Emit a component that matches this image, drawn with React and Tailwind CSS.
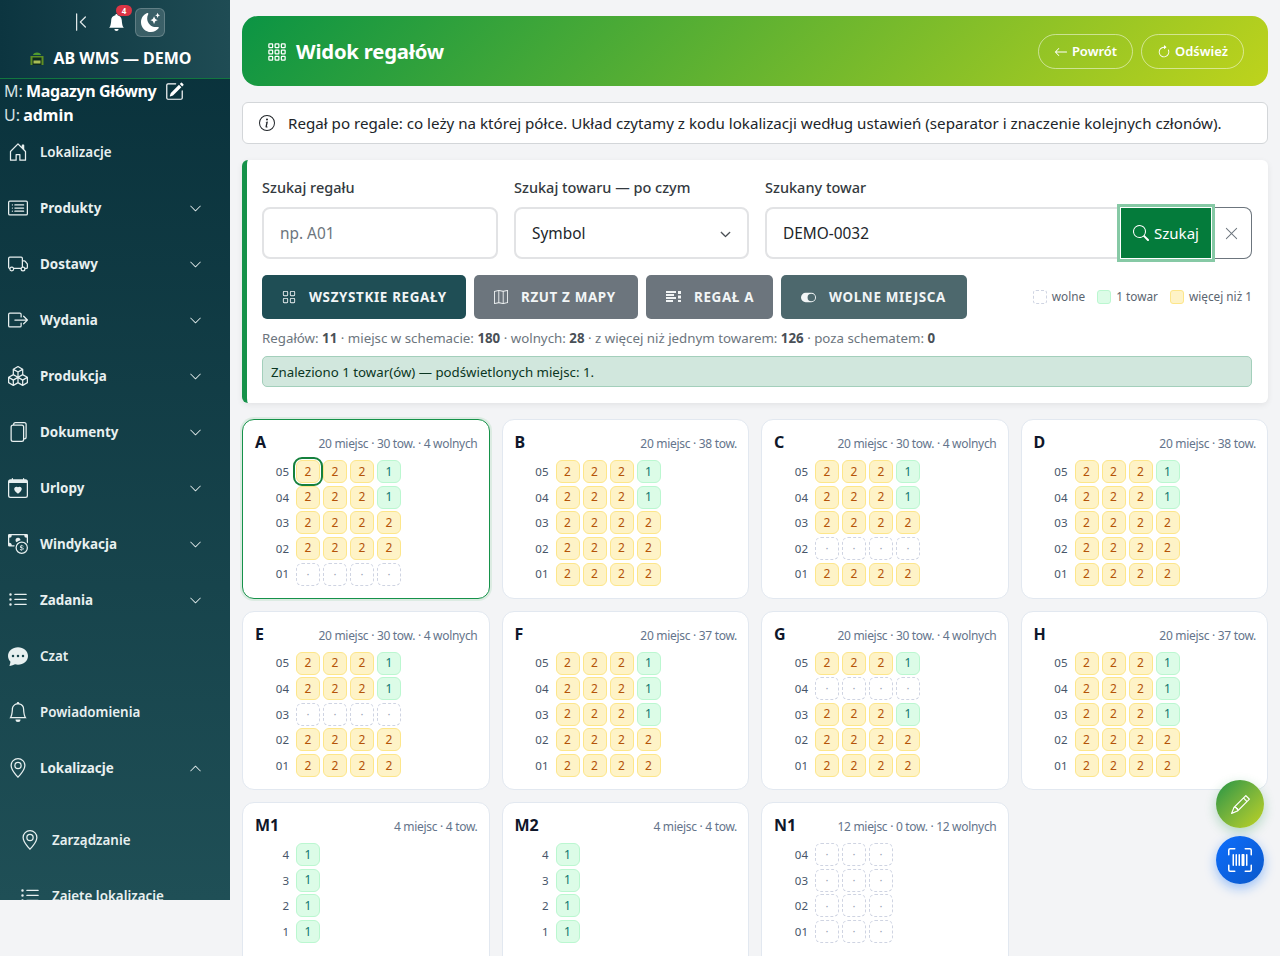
import React from "react";
import {
  BsArrowClockwise,
  BsArrowLeft,
  BsBell,
  BsBellFill,
  BsBoxArrowRight,
  BsBoxes,
  BsCalendarHeart,
  BsCardList,
  BsCashCoin,
  BsChatDotsFill,
  BsChevronBarLeft,
  BsChevronDown,
  BsChevronUp,
  BsFiles,
  BsGeoAlt,
  BsGrid,
  BsGrid3X3Gap,
  BsHouseDoor,
  BsInfoCircle,
  BsListUl,
  BsMap,
  BsMoonStarsFill,
  BsPencil,
  BsPencilSquare,
  BsSearch,
  BsToggleOn,
  BsTruck,
  BsUpcScan,
  BsXLg,
} from "react-icons/bs";

const menu = [
  { label: "Lokalizacje", icon: BsHouseDoor, plain: true },
  { label: "Produkty", icon: BsCardList },
  { label: "Dostawy", icon: BsTruck },
  { label: "Wydania", icon: BsBoxArrowRight },
  { label: "Produkcja", icon: BsBoxes },
  { label: "Dokumenty", icon: BsFiles },
  { label: "Urlopy", icon: BsCalendarHeart },
  { label: "Windykacja", icon: BsCashCoin },
  { label: "Zadania", icon: BsListUl },
  { label: "Czat", icon: BsChatDotsFill, plain: true },
  { label: "Powiadomienia", icon: BsBell, plain: true },
];

const full = "2222";
const racks = [
  { name: "A", info: "20 miejsc · 30 tow. · 4 wolnych", rows: [["05", "2221", true], ["04", "2221"], ["03", full], ["02", full], ["01", "...."]] },
  { name: "B", info: "20 miejsc · 38 tow.", rows: [["05", "2221"], ["04", "2221"], ["03", full], ["02", full], ["01", full]] },
  { name: "C", info: "20 miejsc · 30 tow. · 4 wolnych", rows: [["05", "2221"], ["04", "2221"], ["03", full], ["02", "...."], ["01", full]] },
  { name: "D", info: "20 miejsc · 38 tow.", rows: [["05", "2221"], ["04", "2221"], ["03", full], ["02", full], ["01", full]] },
  { name: "E", info: "20 miejsc · 30 tow. · 4 wolnych", rows: [["05", "2221"], ["04", "2221"], ["03", "...."], ["02", full], ["01", full]] },
  { name: "F", info: "20 miejsc · 37 tow.", rows: [["05", "2221"], ["04", "2221"], ["03", "2221"], ["02", full], ["01", full]] },
  { name: "G", info: "20 miejsc · 30 tow. · 4 wolnych", rows: [["05", "2221"], ["04", "...."], ["03", "2221"], ["02", full], ["01", full]] },
  { name: "H", info: "20 miejsc · 37 tow.", rows: [["05", "2221"], ["04", "2221"], ["03", "2221"], ["02", full], ["01", full]] },
  { name: "M1", info: "4 miejsc · 4 tow.", rows: [["4", "1"], ["3", "1"], ["2", "1"], ["1", "1"]] },
  { name: "M2", info: "4 miejsc · 4 tow.", rows: [["4", "1"], ["3", "1"], ["2", "1"], ["1", "1"]] },
  { name: "N1", info: "12 miejsc · 0 tow. · 12 wolnych", rows: [["04", "..."], ["03", "..."], ["02", "..."], ["01", "..."]] },
];

function Cell({ value, found }) {
  if (value === ".") {
    return (
      <div className="w-6 h-[23px] rounded-md border border-dashed border-[#cfd4e2] flex items-center justify-center text-[11px] text-[#9aa3b5]">
        ·
      </div>
    );
  }
  const tone =
    value === "1"
      ? "bg-[#dcfce7] border-[#bbf7d0] text-[#0f766e]"
      : "bg-[#fef3c7] border-[#fde68a] text-[#b45309]";
  return (
    <div
      className={`w-6 h-[23px] rounded-md border flex items-center justify-center text-xs ${tone} ${
        found ? "outline-2 outline-[#15803d] outline-offset-[1px]" : ""
      }`}
    >
      {value}
    </div>
  );
}

function RackCard({ rack }) {
  const active = rack.name === "A";
  return (
    <div
      className={`bg-white rounded-xl border pl-3 pr-[11px] pt-[12px] pb-3 min-h-[179.5px] ${
        active ? "border-[#16924a] shadow-[0_0_0_2px_#dcebe2]" : "border-[#e2e8f0]"
      }`}
    >
      <div className="flex items-baseline justify-between h-5 mb-[8px]">
        <span className="text-base font-bold text-[#0f172a] leading-5">{rack.name}</span>
        <span className="text-xs tracking-[-0.3px] text-[#64748b]">{rack.info}</span>
      </div>
      <div className="flex flex-col gap-[2.65px]">
        {rack.rows.map(([label, cells, found]) => (
          <div key={label} className="flex items-center gap-[3px]">
            <span className="w-[34px] mr-[4px] text-right text-[11.5px] text-[#475569]">{label}</span>
            {cells.split("").map((v, i) => (
              <Cell key={i} value={v} found={found && i === 0} />
            ))}
          </div>
        ))}
      </div>
    </div>
  );
}

function NavRow({ item }) {
  const Icon = item.icon;
  return (
    <div className="h-14 flex items-center pl-2 pr-[28px] text-[#e8f0f0]">
      <span className="w-[32px] flex justify-start">
        <Icon className="text-[20px]" />
      </span>
      <span className={`flex-1 text-[13.4px] ${item.plain ? "font-semibold" : "font-bold"}`}>{item.label}</span>
      {!item.plain && <BsChevronDown className="text-[13px]" />}
    </div>
  );
}

function Sidebar() {
  return (
    <aside className="w-[230px] h-[900px] shrink-0 overflow-hidden text-white bg-gradient-to-b from-[#08303a] to-[#1f4f56]">
      <div className="h-[79px] border-b border-[#12763f] bg-gradient-to-r from-[#0c3540] to-[#1f4c54] flex flex-col items-center">
        <div className="flex items-center h-[44px] pl-[10px]">
          <BsChevronBarLeft className="text-[20px] text-[#dfe7e8] mr-[17px] ml-[-4px]" />
          <span className="relative mr-[10px]">
            <BsBellFill className="text-[17px]" />
            <span className="absolute -top-[9px] -right-[7px] h-[11px] w-4 rounded-full bg-[#dc3545] text-[8px] font-bold leading-[11px] text-center">
              4
            </span>
          </span>
          <span className="w-[30px] h-[29px] rounded-md bg-white/15 border border-white/20 flex items-center justify-center">
            <BsMoonStarsFill className="text-[19px]" />
          </span>
        </div>
        <div className="flex items-center mt-[2px] pr-[10px]">
          <svg width="16" height="16" viewBox="0 0 16 16" className="mr-[9px]">
            <path d="M4 5 C4 1.5 12 1.5 12 5 Z" fill="#4f9c2f" />
            <path d="M1.5 6 H14.5 V15 H1.5 Z" fill="#5f8f24" />
            <rect x="3.5" y="7.5" width="9" height="7.5" fill="#0d2a20" />
            <rect x="4.5" y="10.5" width="7" height="3" fill="#a9bd55" />
          </svg>
          <span className="text-base font-bold">AB WMS — DEMO</span>
        </div>
      </div>
      <div className="pl-1 text-base leading-6 text-[#d7e2e3]">
        <div className="flex items-center">
          M:&nbsp;<b className="text-white tracking-[-0.35px] -ml-[1px]">Magazyn Główny</b>
          <BsPencilSquare className="ml-[9px] text-[19px] text-white" />
        </div>
        <div>
          U: <b className="text-white -ml-[1px]">admin</b>
        </div>
      </div>
      <div className="-mt-[3px]">
        {menu.map((item) => (
          <NavRow key={item.label} item={item} />
        ))}
      </div>
      <div className="h-14 flex items-center pl-2 pr-[28px] text-[#e8f0f0]">
        <span className="w-[32px]">
          <BsGeoAlt className="text-[20px]" />
        </span>
        <span className="flex-1 text-[13.4px] font-bold">Lokalizacje</span>
        <BsChevronUp className="text-[13px]" />
      </div>
      <div className="pt-[16px] pl-5 text-[#e8f0f0]">
        <div className="h-14 flex items-center">
          <span className="w-[32px]">
            <BsGeoAlt className="text-[20px]" />
          </span>
          <span className="text-[13.4px] font-semibold">Zarządzanie</span>
        </div>
        <div className="h-14 flex items-center">
          <span className="w-[32px]">
            <BsListUl className="text-[20px]" />
          </span>
          <span className="text-[13.4px] font-semibold">Zajęte lokalizacje</span>
        </div>
      </div>
    </aside>
  );
}

function RackIcon() {
  return (
    <svg width="15" height="14" viewBox="0 0 15 14" fill="currentColor">
      <rect x="0" y="1" width="10" height="2" />
      <rect x="0" y="4" width="8" height="2" />
      <rect x="0" y="7" width="10" height="2" />
      <rect x="0" y="10" width="7" height="2" />
      <rect x="12" y="1" width="3" height="3" />
      <rect x="12" y="5.5" width="3" height="3" />
      <rect x="12" y="10" width="3" height="2" />
    </svg>
  );
}

function Toolbar() {
  const base = "h-11 rounded-[5px] flex items-center pl-5 gap-[13px] text-[13.4px] font-bold tracking-[0.65px] text-[#f2f5f6]";
  return (
    <div className="flex items-center mt-4">
      <div className="flex gap-2">
        <button className={`${base} w-[204px] bg-[#1f4e55]`}>
          <BsGrid className="text-[14px]" />
          WSZYSTKIE REGAŁY
        </button>
        <button className={`${base} w-[164px] bg-[#6c757d]`}>
          <BsMap className="text-[14px]" />
          RZUT Z MAPY
        </button>
        <button className={`${base} w-[127px] bg-[#6c757d]`}>
          <RackIcon />
          REGAŁ A
        </button>
        <button className={`${base} w-[186px] bg-[#4d686d]`}>
          <BsToggleOn className="text-[15px]" />
          WOLNE MIEJSCA
        </button>
      </div>
      <div className="ml-auto flex items-center text-[11.8px] text-[#5b6570]">
        <span className="w-[14px] h-[14px] rounded-[3px] border border-dashed border-[#cfd4e2] mr-[5px]" />
        wolne
        <span className="w-[14px] h-[14px] rounded-[3px] border border-[#bbf7d0] bg-[#dcfce7] ml-[12px] mr-[5px]" />
        1 towar
        <span className="w-[14px] h-[14px] rounded-[3px] border border-[#fde68a] bg-[#fef3c7] ml-[12px] mr-[5px]" />
        więcej niż 1
      </div>
    </div>
  );
}

function SearchPanel() {
  const field = "h-[52px] bg-white rounded-lg border-2 border-[#e2e3e5] flex items-center px-[16px] pt-[2px] text-[15.4px]";
  const label = "text-[14.5px] font-medium text-[#343a40] h-[23px] pt-[1px] mb-[8px]";
  return (
    <div className="mt-4 h-[243px] bg-white rounded-md border-l-[5px] border-[#16924a] shadow-[0_2px_6px_rgba(0,0,0,0.07)] pl-[15px] pr-4 pt-[16px]">
      <div className="grid grid-cols-[236px_235px_1fr] gap-x-[16px]">
        <div>
          <div className={label}>Szukaj regału</div>
          <div className={`${field} text-[#6c757d]`}>np. A01</div>
        </div>
        <div>
          <div className={label}>Szukaj towaru — po czym</div>
          <div className={`${field} justify-between text-[#212529]`}>
            Symbol
            <BsChevronDown className="text-[11px] text-[#343a40] stroke-[1px]" />
          </div>
        </div>
        <div>
          <div className={label}>Szukany towar</div>
          <div className="flex h-[52px]">
            <div className={`${field} flex-1 rounded-r-none border-r-0 text-[#212529]`}>DEMO-0032</div>
            <button className="relative z-10 w-[92px] h-[52px] bg-[#047b3b] text-white flex items-center justify-center gap-[5px] text-[15px] outline-3 outline-[#86c9a5] border border-white">
              <BsSearch className="text-[16px]" />
              Szukaj
            </button>
            <button className="w-10 rounded-r-lg border border-l-0 border-[#6c757d] flex items-center justify-center text-[#6c757d]">
              <BsXLg className="text-[15px]" />
            </button>
          </div>
        </div>
      </div>
      <Toolbar />
      <div className="text-[13.3px] text-[#6c757d] mt-[10px] h-[19px] leading-[19px]">
        Regałów: <b className="text-[#495057]">11</b> · miejsc w schemacie: <b className="text-[#495057]">180</b> · wolnych:{" "}
        <b className="text-[#495057]">28</b> · z więcej niż jednym towarem: <b className="text-[#495057]">126</b> · poza schematem:{" "}
        <b className="text-[#495057]">0</b>
      </div>
      <div className="mt-[8px] h-[31px] rounded-[5px] border border-[#a3cfbb] bg-[#d1e7dd] px-2 pt-[2px] flex items-center text-[13.25px] text-[#0a3622]">
        Znaleziono 1 towar(ów) — podświetlonych miejsc: 1.
      </div>
    </div>
  );
}

export default function App() {
  return (
    <div className="relative h-[956px] w-full overflow-hidden bg-[#f3f4f6] flex items-start font-['Noto_Sans',sans-serif]">
      <Sidebar />
      <main className="flex-1 pl-3 pr-3 pt-4">
        <div className="h-[70px] rounded-2xl bg-[linear-gradient(135deg,#0b9444,#bed31c)] flex items-center justify-between pl-[25px] pr-6">
          <div className="flex items-center gap-[9px] text-white pt-[1px]">
            <BsGrid3X3Gap className="text-[20px]" />
            <span className="text-[20.3px] font-bold tracking-[-0.2px]">Widok regałów</span>
          </div>
          <div className="flex gap-2 text-white">
            <button className="h-[35px] w-[95px] pt-[1px] rounded-full border border-white/50 flex items-center justify-center gap-1 text-[13px] font-semibold">
              <BsArrowLeft className="text-[14px]" />
              Powrót
            </button>
            <button className="h-[35px] w-[103px] pt-[1px] rounded-full border border-white/50 flex items-center justify-center gap-1 text-[13px] font-semibold">
              <BsArrowClockwise className="text-[14px]" />
              Odśwież
            </button>
          </div>
        </div>
        <div className="mt-4 h-[42px] bg-white rounded-md border border-[#d3d6d9] flex items-center pl-4 text-[#212529] text-[15.15px]">
          <BsInfoCircle className="text-[16px] mr-[13px]" />
          Regał po regale: co leży na której półce. Układ czytamy z kodu lokalizacji według ustawień (separator i znaczenie kolejnych członów).
        </div>
        <SearchPanel />
        <div className="grid grid-cols-4 gap-3 mt-4">
          {racks.map((rack) => (
            <RackCard key={rack.name} rack={rack} />
          ))}
        </div>
      </main>
      <div className="absolute right-4 top-[780px] flex flex-col gap-2 text-white">
        <button className="w-12 h-12 rounded-full bg-gradient-to-br from-[#0b9444] to-[#bed31c] shadow-[0_4px_12px_rgba(22,146,74,0.3)] flex items-center justify-center">
          <BsPencil className="text-[19px]" />
        </button>
        <button className="w-12 h-12 rounded-full bg-gradient-to-br from-[#0d6efd] to-[#0a58ca] shadow-[0_4px_12px_rgba(13,110,253,0.4)] flex items-center justify-center">
          <BsUpcScan className="text-[24px]" />
        </button>
      </div>
    </div>
  );
}
